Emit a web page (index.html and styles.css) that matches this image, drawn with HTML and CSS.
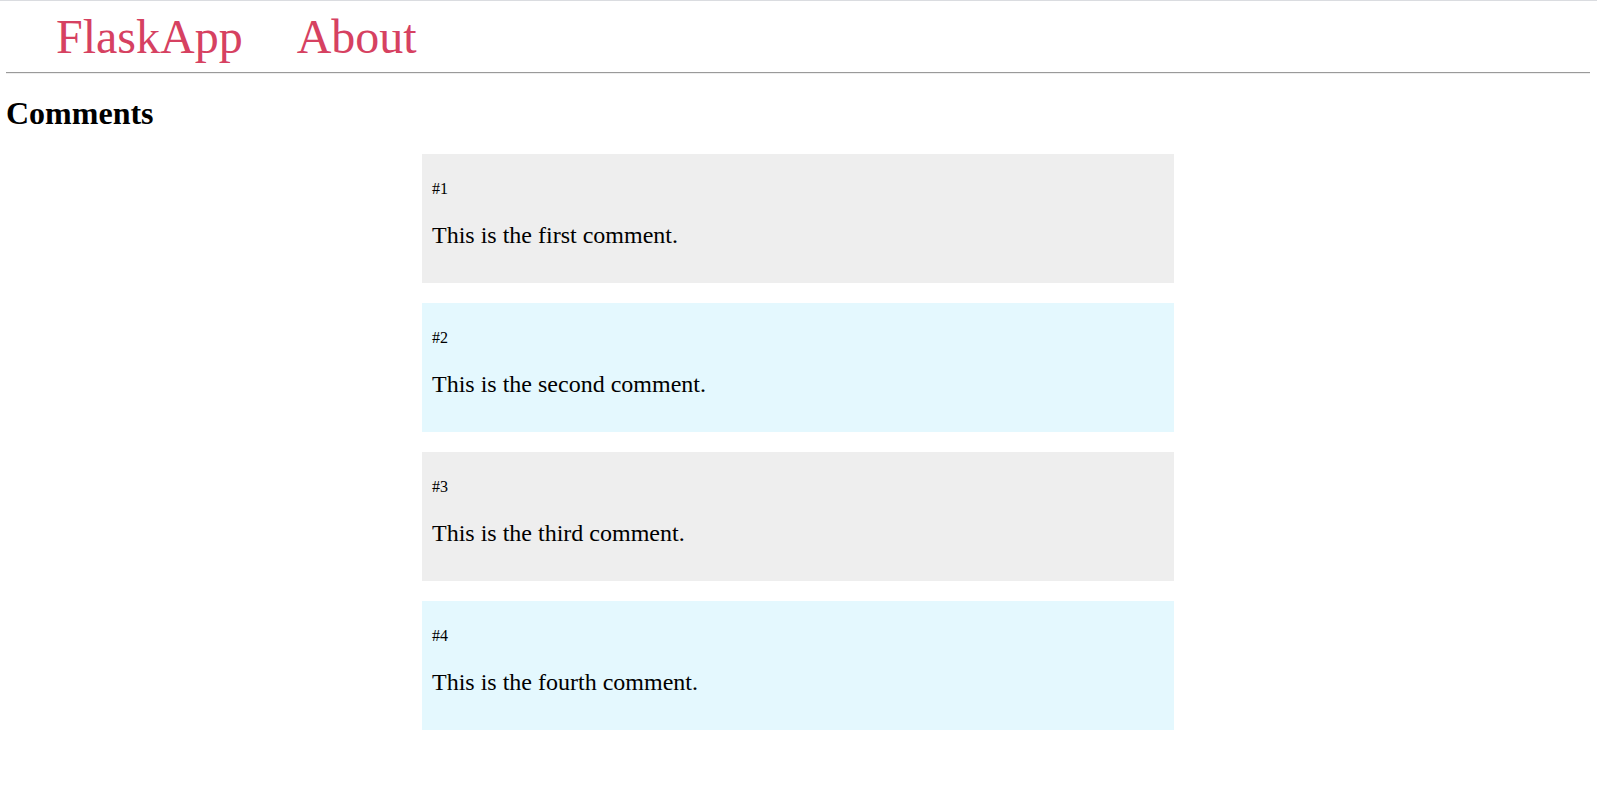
FILE: index.html
```html
<!DOCTYPE html>
<html lang="en">
<head>
<meta charset="utf-8">
<title>Comments - FlaskApp</title>
<link rel="stylesheet" href="styles.css">
</head>
<body>
<div class="topline"></div>
<div class="page">
  <nav class="nav">
    <a href="#" class="nav-link">FlaskApp</a>
    <a href="#" class="nav-link">About</a>
  </nav>
  <hr class="rule">
  <div class="content">
    <h1 class="title">Comments</h1>
    <div class="comments">
      <div class="comment comment-odd">
        <p class="comment-num">#1</p>
        <p class="comment-text">This is the first comment.</p>
      </div>
      <div class="comment comment-even">
        <p class="comment-num">#2</p>
        <p class="comment-text">This is the second comment.</p>
      </div>
      <div class="comment comment-odd">
        <p class="comment-num">#3</p>
        <p class="comment-text">This is the third comment.</p>
      </div>
      <div class="comment comment-even">
        <p class="comment-num">#4</p>
        <p class="comment-text">This is the fourth comment.</p>
      </div>
    </div>
  </div>
</div>
</body>
</html>
```
FILE: styles.css
```css
html, body {
  margin: 0;
  padding: 0;
  background: #ffffff;
}
body {
  font-family: "Liberation Serif", "Times New Roman", serif;
  font-size: 16px;
  color: #000000;
}
.topline {
  height: 1px;
  background: #dadce0;
}
.page {
  padding: 8px 7px 8px 6px;
}
.nav {
  display: flex;
  align-items: baseline;
  gap: 5px;
  padding-left: 50px;
}
.nav-link {
  color: #d64161;
  font-size: 48px;
  text-decoration: none;
}
.nav-link + .nav-link {
  margin-left: 49px;
}
.rule {
  margin: 8px 0;
  border: 0;
  border-top: 1px solid #9a9a9a;
  border-bottom: 1px solid #eeeeee;
  height: 0;
}
.title {
  font-size: 32px;
  font-weight: bold;
  margin: 21px 0 21.5px;
}
.comments {
  width: 792px;
  margin: 0 auto;
  display: flex;
  flex-direction: column;
  gap: 20px;
  padding: 0 20px;
  box-sizing: border-box;
}
.comment {
  padding: 10px;
}
.comment-odd {
  background: #eeeeee;
}
.comment-even {
  background: #e4f8fe;
}
.comment-num {
  margin: 16px 0 24px;
  font-size: 16px;
}
.comment-text {
  margin: 0 0 24px;
  font-size: 24px;
}
```
